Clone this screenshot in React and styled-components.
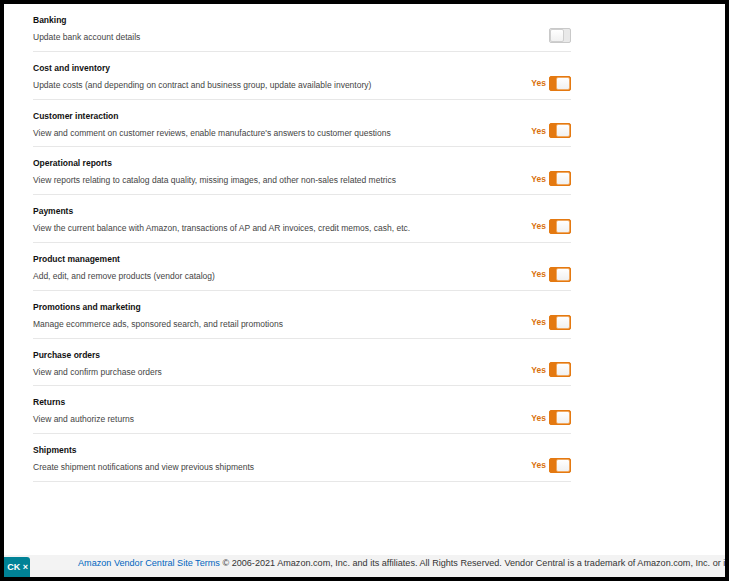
import React from 'react';
import styled, { createGlobalStyle } from 'styled-components';

const GlobalStyle = createGlobalStyle`
  html, body {
    margin: 0;
    padding: 0;
    background: #ffffff;
  }
  body {
    font-family: "Liberation Sans", Arial, sans-serif;
  }
`;

const Frame = styled.div`
  box-sizing: border-box;
  width: 729px;
  height: 581px;
  border: 4px solid #000;
  display: flex;
  flex-direction: column;
  overflow: hidden;
`;

const List = styled.div`
  width: 538px;
  margin-left: 29px;
  display: flex;
  flex-direction: column;
`;

const Row = styled.div`
  display: flex;
  align-items: flex-end;
  padding: 10px 0 7px;
  border-bottom: 1px solid #e7e7e7;
  height: 47.8px;
  box-sizing: border-box;
`;

const Info = styled.div`
  flex: 1;
  display: flex;
  flex-direction: column;
  gap: 4px;
  align-self: flex-start;
`;

const Title = styled.div`
  font-size: 8.5px;
  line-height: 13px;
  font-weight: bold;
  color: #111;
`;

const Desc = styled.div`
  font-size: 8.5px;
  line-height: 13px;
  color: #444;
`;

const Control = styled.div`
  display: flex;
  align-items: center;
  gap: 3px;
  margin-bottom: 1px;
`;

const YesLabel = styled.span`
  font-size: 8.5px;
  font-weight: bold;
  color: #d9700c;
`;

const Toggle = styled.div`
  box-sizing: border-box;
  width: 22px;
  height: 15px;
  border-radius: 2px;
  display: flex;
  border: 1px solid ${p => (p.on ? '#e47911' : '#c9c9c9')};
  background: ${p => (p.on ? '#e47911' : '#e9e9e9')};
  overflow: hidden;
`;

const Knob = styled.div`
  box-sizing: border-box;
  width: 14px;
  height: 100%;
  background: linear-gradient(#ffffff, #f1f1f1);
  border: 1px solid ${p => (p.on ? '#f0a860' : '#cfcfcf')};
  border-radius: 2px;
  margin-left: ${p => (p.on ? 'auto' : '0')};
  margin-right: ${p => (p.on ? '0' : 'auto')};
`;

const Footer = styled.div`
  margin-top: auto;
  height: 22px;
  background: #f3f3f3;
  display: flex;
  align-items: flex-start;
  white-space: nowrap;
  font-size: 9.1px;
  color: #333;
`;

const Feedback = styled.div`
  height: 20px;
  margin-top: 2px;
  width: 26px;
  background: #008296;
  color: #fff;
  font-size: 9px;
  font-weight: bold;
  display: flex;
  align-items: center;
  justify-content: flex-end;
  padding-right: 2px;
  box-sizing: border-box;
  border-top-right-radius: 3px;
  flex-shrink: 0;
`;

const FooterText = styled.div`
  margin-left: 48px;
  padding-top: 2px;
  line-height: 12px;
`;

const TermsLink = styled.a`
  color: #0066c0;
  text-decoration: none;
`;

const permissions = [
  { title: 'Banking', desc: 'Update bank account details', on: false },
  { title: 'Cost and inventory', desc: 'Update costs (and depending on contract and business group, update available inventory)', on: true },
  { title: 'Customer interaction', desc: "View and comment on customer reviews, enable manufacture's answers to customer questions", on: true },
  { title: 'Operational reports', desc: 'View reports relating to catalog data quality, missing images, and other non-sales related metrics', on: true },
  { title: 'Payments', desc: 'View the current balance with Amazon, transactions of AP and AR invoices, credit memos, cash, etc.', on: true },
  { title: 'Product management', desc: 'Add, edit, and remove products (vendor catalog)', on: true },
  { title: 'Promotions and marketing', desc: 'Manage ecommerce ads, sponsored search, and retail promotions', on: true },
  { title: 'Purchase orders', desc: 'View and confirm purchase orders', on: true },
  { title: 'Returns', desc: 'View and authorize returns', on: true },
  { title: 'Shipments', desc: 'Create shipment notifications and view previous shipments', on: true },
];

export default function App() {
  return (
    <>
      <GlobalStyle />
      <Frame>
        <List>
          {permissions.map(p => (
            <Row key={p.title}>
              <Info>
                <Title>{p.title}</Title>
                <Desc>{p.desc}</Desc>
              </Info>
              <Control>
                {p.on && <YesLabel>Yes</YesLabel>}
                <Toggle on={p.on}>
                  <Knob on={p.on} />
                </Toggle>
              </Control>
            </Row>
          ))}
        </List>
        <Footer>
          <Feedback>CK ×</Feedback>
          <FooterText>
            <TermsLink href="#">Amazon Vendor Central Site Terms</TermsLink> © 2006-2021 Amazon.com, Inc. and its affiliates. All Rights Reserved. Vendor Central is a trademark of Amazon.com, Inc. or its affiliates.
          </FooterText>
        </Footer>
      </Frame>
    </>
  );
}
